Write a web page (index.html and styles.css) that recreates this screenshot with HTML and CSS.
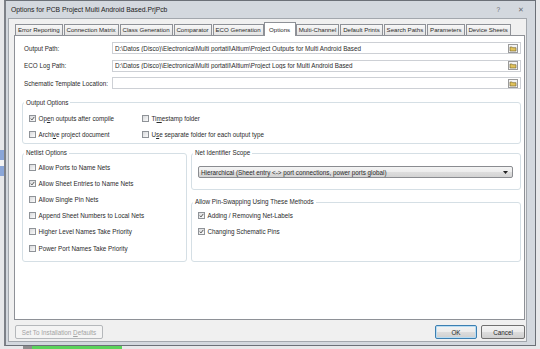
FILE: index.html
```html
<!DOCTYPE html>
<html lang="en">
<head>
    <meta charset="UTF-8">
    <meta name="viewport" content="width=device-width, initial-scale=1.0">
    <title>Options for PCB Project</title>
    <link rel="stylesheet" href="styles.css">
</head>
<body>
    <div class="window">
        <div class="titlebar">
            <span class="title">Options for PCB Project Multi Android Based.PrjPcb</span>
            <span class="caption-btns"><span>?</span><span>✕</span></span>
        </div>
        <div class="client">
            <div class="tabs">
                <div class="tab">Error Reporting</div>
                <div class="tab">Connection Matrix</div>
                <div class="tab">Class Generation</div>
                <div class="tab">Comparator</div>
                <div class="tab">ECO Generation</div>
                <div class="tab active">Options</div>
                <div class="tab">Multi-Channel</div>
                <div class="tab">Default Prints</div>
                <div class="tab">Search Paths</div>
                <div class="tab">Parameters</div>
                <div class="tab">Device Sheets</div>
            </div>
            <div class="panel">
                <div class="paths">
                    <label>Output Path:</label>
                    <div class="field">
                        <span class="text">D:\Datos (Disco)\Electronica\Multi portatil\Altium\Project Outputs for Multi Android Based</span>
                        <svg class="browse" width="10" height="9" viewBox="0 0 10 9"><rect x="0.5" y="0.5" width="9" height="8" fill="#f3f3f3" stroke="#9b9b9b"/><path d="M2 3h2.2l.6.7H8v3.3H2z" fill="#e2c35c" stroke="#6b5a26" stroke-width=".6"/></svg>
                    </div>
                    <label>ECO Log Path:</label>
                    <div class="field">
                        <span class="text">D:\Datos (Disco)\Electronica\Multi portatil\Altium\Project Logs for Multi Android Based</span>
                        <svg class="browse" width="10" height="9" viewBox="0 0 10 9"><rect x="0.5" y="0.5" width="9" height="8" fill="#f3f3f3" stroke="#9b9b9b"/><path d="M2 3h2.2l.6.7H8v3.3H2z" fill="#e2c35c" stroke="#6b5a26" stroke-width=".6"/></svg>
                    </div>
                    <label>Schematic Template Location:</label>
                    <div class="field">
                        <span class="text"></span>
                        <svg class="browse" width="10" height="9" viewBox="0 0 10 9"><rect x="0.5" y="0.5" width="9" height="8" fill="#f3f3f3" stroke="#9b9b9b"/><path d="M2 3h2.2l.6.7H8v3.3H2z" fill="#e2c35c" stroke="#6b5a26" stroke-width=".6"/></svg>
                    </div>
                </div>

                <fieldset class="group output-opts">
                    <legend>Output Options</legend>
                    <div class="opts-grid">
                        <div class="cb"><span class="box on"></span><span>Op<u>e</u>n outputs after compile</span></div>
                        <div class="cb"><span class="box"></span><span>Ti<u>m</u>estamp folder</span></div>
                        <div class="cb"><span class="box"></span><span>Archi<u>v</u>e project document</span></div>
                        <div class="cb"><span class="box"></span><span>U<u>s</u>e separate folder for each output type</span></div>
                    </div>
                </fieldset>

                <div class="cols">
                    <fieldset class="group netlist">
                        <legend>Netlist Options</legend>
                        <div class="list">
                            <div class="cb"><span class="box"></span><span>Allow Ports to Name Nets</span></div>
                            <div class="cb"><span class="box on"></span><span>Allow Sheet Entries to Name Nets</span></div>
                            <div class="cb"><span class="box"></span><span>Allow Single Pin Nets</span></div>
                            <div class="cb"><span class="box"></span><span>Append Sheet Numbers to Local Nets</span></div>
                            <div class="cb"><span class="box"></span><span>Higher Level Names Take Priority</span></div>
                            <div class="cb"><span class="box"></span><span>Power Port Names Take Priority</span></div>
                        </div>
                    </fieldset>
                    <div class="right-col">
                        <fieldset class="group scope">
                            <legend>Net Identifier Scope</legend>
                            <div class="combo">
                                <span>Hierarchical (Sheet entry &lt;-&gt; port connections, power ports global)</span>
                                <svg width="5" height="3" viewBox="0 0 5 3"><path d="M0 0h5L2.5 3z" fill="#222"/></svg>
                            </div>
                        </fieldset>
                        <fieldset class="group swap">
                            <legend>Allow Pin-Swapping Using These Methods</legend>
                            <div class="list">
                                <div class="cb"><span class="box on"></span><span>Adding / Removing Net-Labels</span></div>
                                <div class="cb"><span class="box on"></span><span>Changing Schematic Pins</span></div>
                            </div>
                        </fieldset>
                    </div>
                </div>
            </div>
            <div class="footer">
                <button class="btn wide" disabled>Set To Installation <u>D</u>efaults</button>
                <span class="spacer"></span>
                <button class="btn default ok">OK</button>
                <button class="btn cancel">Cancel</button>
            </div>
        </div>
    </div>
    <div class="below">
        <span class="grey"></span>
        <span class="green"></span>
    </div>
</body>
</html>
```

FILE: styles.css
```css
* {
    margin: 0;
    padding: 0;
    box-sizing: border-box;
}

body {
    width: 540px;
    height: 349px;
    overflow: hidden;
    font-family: "Liberation Sans", Arial, sans-serif;
    font-size: 6.3px;
    color: #2a2a2a;
    background:
        linear-gradient(to bottom, transparent 150px, #8aa6d8 150px, #8aa6d8 160px, #f4f4f4 160px, #f4f4f4 166px, #8aa6d8 166px, #8aa6d8 176px, transparent 176px) no-repeat 0 0 / 4px 349px,
        #e7e8ea;
}

.window {
    margin-left: 4px;
    width: 532px;
    height: 346px;
    background: #d3d8de;
    border: 1px solid #6b7077;
    border-left: 2px solid #7d8188;
    padding: 0 8px 3px 2px;
    display: flex;
    flex-direction: column;
}

.titlebar {
    height: 17px;
    display: flex;
    align-items: center;
    justify-content: space-between;
    padding: 0 3px 0 3px;
}

.title {
    font-size: 6.8px;
    color: #1b1b1b;
}

.caption-btns {
    display: flex;
    gap: 18px;
    font-size: 6.5px;
    color: #6a6d72;
}

.client {
    flex: 1;
    background: #f0f0f0;
    border: 1px solid #a2a7ad;
    padding: 3px 1px 2px 5px;
    display: flex;
    flex-direction: column;
}

/* tab strip */
.tabs {
    display: flex;
    align-items: flex-end;
    gap: 1px;
    height: 13px;
    padding-left: 1px;
    font-size: 6.1px;
}

.tab {
    height: 11px;
    line-height: 10px;
    padding: 0 1.95px;
    white-space: nowrap;
    border: 1px solid #8e9197;
    border-bottom: none;
    background: linear-gradient(#f7f7f7, #e3e3e3);
}

.tab.active {
    height: 14px;
    line-height: 13px;
    padding: 0 4.6px;
    margin: 0 -1px -1px;
    background: #fff;
    position: relative;
    z-index: 1;
}

.panel {
    flex: 1;
    background: #fff;
    border: 1px solid #8e9197;
    padding: 6px 3px 0 7px;
    display: flex;
    flex-direction: column;
}

/* path rows */
.paths {
    display: grid;
    grid-template-columns: 88px 1fr;
    row-gap: 5.5px;
    align-items: center;
    padding-left: 2px;
}

.field {
    height: 12px;
    border: 1px solid #cdd0d5;
    display: flex;
    align-items: center;
    padding-left: 2px;
}

.field .text {
    flex: 1;
    white-space: nowrap;
    overflow: hidden;
}

.browse {
    margin-right: 2px;
}

/* group boxes */
.group {
    border: 1px solid #d5dfe5;
    border-radius: 3px;
    padding: 0 0 0 6px;
    min-width: 0;
}

.group legend {
    line-height: 8px;
    padding: 0 2px;
    margin-left: -5px;
}

.output-opts {
    margin-top: 9.5px;
    padding-bottom: 1px;
}

.opts-grid {
    display: grid;
    grid-template-columns: 113px 1fr;
    padding-top: 3.5px;
}

.cb {
    display: flex;
    align-items: center;
    gap: 2.5px;
    height: 16px;
    white-space: nowrap;
}

.netlist .cb {
    height: 16.2px;
}

.box {
    width: 7px;
    height: 7px;
    border: 1px solid #8f9398;
    background: linear-gradient(135deg, #d9dadc, #fbfbfb);
    flex-shrink: 0;
}

.box.on {
    background:
        url("data:image/svg+xml;utf8,<svg xmlns='http://www.w3.org/2000/svg' viewBox='0 0 5 5'><path d='M0.8 2.6l1.2 1.3 2.3-3' fill='none' stroke='%23333' stroke-width='0.8'/></svg>") center / 5px 5px no-repeat,
        linear-gradient(135deg, #d9dadc, #fbfbfb);
}

.cols {
    flex: 1;
    display: flex;
    gap: 4px;
    margin-top: 5px;
    margin-bottom: 57px;
}

.netlist {
    width: 165px;
    flex-shrink: 0;
}

.netlist .list {
    padding-top: 2px;
}

.right-col {
    flex: 1;
    display: flex;
    flex-direction: column;
}

.scope {
    padding-top: 9px;
    padding-bottom: 11px;
}

.combo {
    height: 12px;
    margin-right: 7px;
    border: 1px solid #8a8c90;
    border-radius: 2px;
    background: linear-gradient(#f4f4f4 0, #ececec 50%, #dedede 50%, #d3d3d3 100%);
    display: flex;
    align-items: center;
    justify-content: space-between;
    padding: 0 4px 0 2px;
    white-space: nowrap;
}

.swap {
    flex: 1;
    margin-top: 8px;
}

.swap .list {
    padding-top: 1px;
}

/* bottom buttons */
.footer {
    display: flex;
    gap: 4px;
    height: 14px;
    margin-top: 5px;
    padding-left: 1px;
}

.spacer {
    flex: 1;
}

.btn {
    height: 14px;
    font: inherit;
    color: #1f1f1f;
    border: 1px solid #707070;
    border-radius: 2px;
    background: linear-gradient(#f3f3f3 0, #ebebeb 50%, #dddddd 50%, #cfcfcf 100%);
}

.btn.wide {
    width: 88px;
    color: #a3a3a3;
    border-color: #b5b8bb;
    background: #f4f4f4;
}

.btn.default {
    border-color: #3c7fb1;
    box-shadow: inset 0 0 0 1px #b8dcf3;
}

.ok {
    width: 42px;
}

.cancel {
    width: 44px;
}

.below {
    display: flex;
    height: 3px;
}

.below .grey {
    margin-left: 23px;
    width: 9px;
    background: #8d8d8d;
}

.below .green {
    width: 90px;
    background: #5bd35b;
}
```
